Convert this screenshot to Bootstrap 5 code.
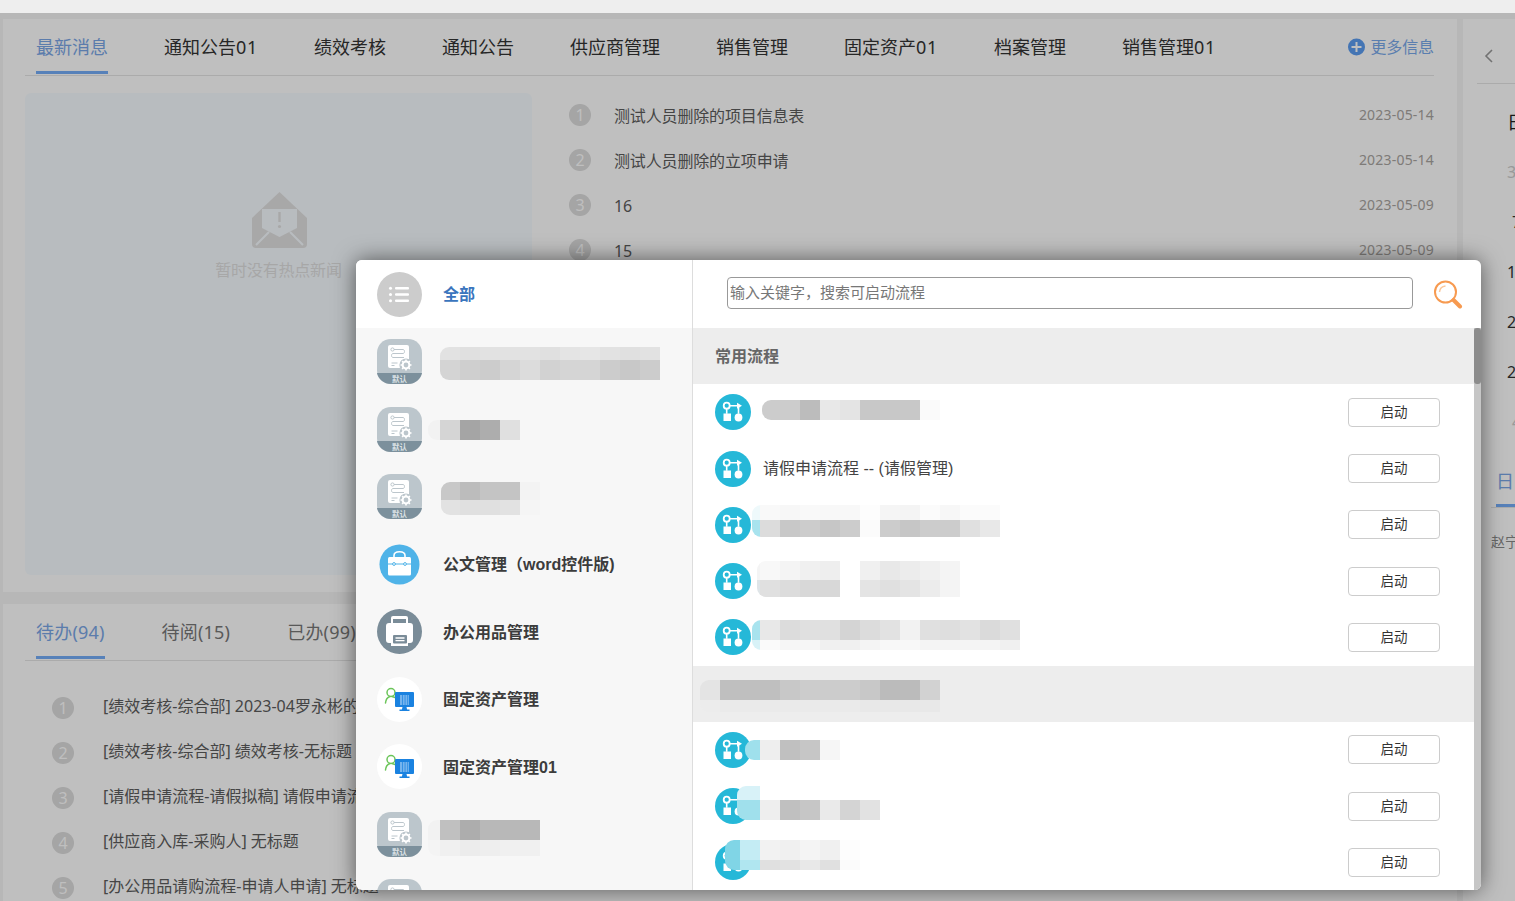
<!DOCTYPE html>
<html lang="zh-CN">
<head>
    <meta charset="UTF-8">
    <meta name="viewport" content="width=device-width, initial-scale=1.0">
    <title>工作台</title>
    <link href="https://cdn.jsdelivr.net/npm/bootstrap@5.3.0/dist/css/bootstrap.min.css" rel="stylesheet">
    <style>
        html, body { height: 901px; overflow: hidden; }
        body {
            font-family: "Noto Sans", "Noto Sans CJK SC", sans-serif;
            background: #f5f5f5;
            color: #333;
            position: relative;
        }
        .top-strip { height: 13px; background: #eee; }
        .desk { height: 888px; padding: 6px 0 0 3px; gap: 6px; }
        .desk-main { width: 1454px; gap: 12px; }
        .pane { background: #fff; }
        .pane-news { height: 573px; padding: 0 23px 0 22px; flex: none; }
        .pane-todo { flex: 1; min-height: 0; overflow: hidden; padding: 0 23px 0 22px; }
        .pane-side { flex: 1; overflow: hidden; min-width: 0; }

        .tab-bar { height: 57px; border-bottom: 1px solid #e4e4e4; padding-left: 11px; gap: 56px; flex-wrap: nowrap; }
        .tab-bar .nav-link {
            padding: 0; height: 55px; line-height: 56px; font-size: 18px; color: #333;
            border-bottom: 3px solid transparent; white-space: nowrap;
        }
        .tab-bar .nav-link.active { color: #7aa6e6; border-bottom-color: #75adf7; }
        .tab-num { letter-spacing: .7px; }
        .tab-bar-todo { gap: 57px; }
        .tab-bar-todo .nav-link { color: #777; letter-spacing: .2px; }
        .more-link { color: #78a8ea; font-size: 16px; text-decoration: none; gap: 5px; height: 56px; letter-spacing: -.1px; }

        .hot-empty {
            width: 507px; height: 482px; margin-top: 17px; background: #f6fbff;
            border-radius: 6px; color: #dfdfdf; font-size: 16px; padding: 99px 0 0 2px; letter-spacing: -.2px;
        }
        .hot-empty p { margin: 10px 2px 0 0; line-height: 24px; }
        .news-list { flex: 1; padding: 17px 0 0 37px; }
        .news-row { height: 45px; gap: 23px; font-size: 16px; color: #5c5c5c; letter-spacing: -.15px; }
        .news-row .when { margin-left: auto; margin-bottom: 2px; font-size: 14px; color: #a8a4a0; letter-spacing: .2px; }
        .news-row .rank { margin-bottom: 2px; }
        .rank {
            width: 22px; height: 22px; border-radius: 50%; background: #dcdcdc; color: #fff;
            font-size: 16px; line-height: 22px; text-align: center; flex: none; letter-spacing: 0;
        }
        .todo-list { padding: 24px 0 0 27px; }
        .todo-row { height: 45px; gap: 29px; font-size: 16px; color: #5c5c5c; white-space: nowrap; }
        .todo-text { margin-bottom: 3px; }

        .side-head { height: 65px; margin-left: 14px; border-bottom: 1px solid #e4e4e4; padding: 9px 0 0 7px; color: #888; }
        .cal-box { padding: 13px 0 0 44px; font-size: 16px; color: #333; white-space: nowrap; }
        .cal-cell { height: 50px; line-height: 50px; }
        .cal-faint { color: #ccc; }
        .cal-title { font-size: 18px; color: #222; height: 50px; line-height: 50px; }
        .cal-in { padding-left: 5px; }
        .side-tabs { margin: 11px 0 0 28px; border-bottom: 1px solid #e4e4e4; padding-left: 5px; height: 50px; overflow: hidden; }
        .side-tab { color: #7aa6e6; font-size: 18px; line-height: 47px; height: 49px; border-bottom: 3px solid #75adf7; width: 60px; }
        .side-name { margin: 23px 0 0 28px; font-size: 14px; color: #888; white-space: nowrap; }

        .dim-layer { position: absolute; left: 0; right: 0; top: 13px; bottom: 0; background: rgba(0, 0, 0, .25); }
        .picker {
            position: absolute; left: 356px; top: 260px; width: 1125px; height: 630px;
            border-radius: 6px; overflow: hidden; box-shadow: 0 0 22px rgba(0, 0, 0, .55);
            font-family: "Liberation Sans", "Noto Sans CJK SC", sans-serif;
        }
        .picker-wrap { position: absolute; inset: 0; }
        .cat-col { width: 337px; background: #f7f7f7; border-right: 1px solid #ddd; overflow: hidden; flex: none; }
        .cat-row { height: 67.5px; padding-left: 21px; gap: 21px; flex: none; font-size: 16px; font-weight: 700; color: #3c3c3c; }
        .cat-row span { padding-top: 2px; }
        .cat-row.current { height: 68px; background: #fff; color: #3a75bd; }
        .ic-45 { width: 45px; height: 45px; flex: none; display: block; }
        .flow-col { flex: 1; min-width: 0; background: #fff; }
        .search-row { height: 68px; padding-left: 34px; gap: 20px; flex: none; }
        .search-row .form-control {
            width: 686px; height: 32px; padding: 0 2px 2px; font-size: 15px; color: #333; margin-bottom: 2px;
            border: 1px solid #999; border-radius: 4px; box-shadow: none;
        }
        .search-row .form-control::placeholder { color: #777; opacity: 1; }
        .flow-scroll { flex: 1; min-height: 0; }
        .flow-body { flex: 1; min-width: 0; overflow: hidden; }
        .flow-head { height: 56.25px; background: #ededed; padding: 2px 0 0 22px; font-size: 16px; font-weight: 700; color: #666; }
        .flow-row { height: 56.25px; padding: 0 34px 0 22px; gap: 12px; font-size: 16px; color: #444; }
        .ic-36 { width: 36px; height: 36px; flex: none; display: block; }
        .start-btn {
            width: 92px; height: 29px; padding: 0; margin-left: auto; font-size: 13.5px; line-height: 25px;
            color: #333; background: #fff; border: 1px solid #ccc; border-radius: 4px;
        }
        .bar-track { width: 7px; background: #c6c6c6; flex: none; }
        .bar-thumb { height: 56px; background: #8c8c8c; border-radius: 3px; }
        .blur-layer { position: absolute; inset: 0; pointer-events: none; }
        .blur-patch { position: absolute; overflow: hidden; border-radius: 9px 0 0 9px; }
        .blur-line { display: flex; }
        .blur-line span { display: block; width: 20px; flex: none; }
    </style>
</head>
<body>
    <svg width="0" height="0" class="position-absolute">
        <symbol id="ic-default" viewBox="0 0 45 45">
            <path d="M14 0h17c8 0 14 6 14 14v17c0 8-6 14-14 14H14C6 45 0 39 0 31V14C0 6 6 0 14 0z" fill="#bcc6cc"/>
            <path d="M0 34h45c-1 6-7 11-14 11H14C7 45 1 40 0 34z" fill="#7c909c"/>
            <rect x="11" y="6" width="21" height="23" rx="2" fill="#fff"/>
            <g fill="none" stroke="#bcc6cc" stroke-width="1">
                <circle cx="15.5" cy="10.5" r="1.6"/>
                <path d="M17 10.5h9c2 0 2 4 0 4H16c-2 0-2 4 0 4h11"/>
                <path d="M14.5 24h6M14.5 26.5h3"/>
            </g>
            <circle cx="29" cy="26" r="6.6" fill="#bcc6cc"/>
            <circle cx="29" cy="26" r="3.4" fill="none" stroke="#fff" stroke-width="2"/>
            <path d="M29 20.5v2M29 29.5v2M23.5 26h2M32.5 26h2M25.1 22.1l1.4 1.4M31.5 28.5l1.4 1.4M25.1 29.9l1.4-1.4M31.5 23.5l1.4-1.4" stroke="#fff" stroke-width="1.6"/>
            <text x="22.5" y="42.5" font-size="7.5" text-anchor="middle" fill="#dbe2e6" font-family="Noto Sans CJK SC, sans-serif">默认</text>
        </symbol>
        <symbol id="ic-assets" viewBox="0 0 45 45">
            <circle cx="22.5" cy="22.5" r="22.5" fill="#fff"/>
            <circle cx="14" cy="15.5" r="4" fill="none" stroke="#6cc55a" stroke-width="1.5"/>
            <path d="M8.5 26c.3-3.5 2-5.6 4.5-6.5M15 19.5l3 1" fill="none" stroke="#6cc55a" stroke-width="1.5" stroke-linecap="round"/>
            <rect x="18" y="15" width="19" height="15" rx="1" fill="#1a82e0"/>
            <path d="M25.5 30h4l.6 2.5h2.4V34h-10v-1.5h2.4z" fill="#1a82e0"/>
            <path d="M23 19h9M23 21h9M23 23h9M23 25h9M23 27h9" stroke="#cfe6fb" stroke-width="1.1" stroke-dasharray="2 .7"/>
        </symbol>
        <symbol id="ic-flow" viewBox="0 0 36 36">
            <circle cx="18" cy="18" r="18" fill="#25b8d8"/>
            <circle cx="11.7" cy="11.7" r="3" fill="none" stroke="#fff" stroke-width="1.8"/>
            <path d="M14.5 11.7h9v8M11.7 14.7v5" fill="none" stroke="#fff" stroke-width="1.6"/>
            <path d="M22 8.7l5 3-5 3z" fill="#fff"/>
            <rect x="8.5" y="19.5" width="7.5" height="7.5" fill="#fff"/>
            <circle cx="23.5" cy="23.5" r="3.9" fill="#fff"/>
        </symbol>
    </svg>

    <div class="top-strip"></div>
    <div class="desk d-flex">
        <div class="desk-main d-flex flex-column">
            <section class="pane pane-news">
                <ul class="nav tab-bar align-items-start">
                    <li class="nav-item"><a class="nav-link active" href="#">最新消息</a></li>
                    <li class="nav-item"><a class="nav-link" href="#">通知公告<span class="tab-num">01</span></a></li>
                    <li class="nav-item"><a class="nav-link" href="#">绩效考核</a></li>
                    <li class="nav-item"><a class="nav-link" href="#">通知公告</a></li>
                    <li class="nav-item"><a class="nav-link" href="#">供应商管理</a></li>
                    <li class="nav-item"><a class="nav-link" href="#">销售管理</a></li>
                    <li class="nav-item"><a class="nav-link" href="#">固定资产<span class="tab-num">01</span></a></li>
                    <li class="nav-item"><a class="nav-link" href="#">档案管理</a></li>
                    <li class="nav-item"><a class="nav-link" href="#">销售管理<span class="tab-num">01</span></a></li>
                    <li class="nav-item ms-auto">
                        <a class="more-link d-flex align-items-center" href="#">
                            <svg width="17" height="18" viewBox="0 0 17 18" class="d-block"><circle cx="8.5" cy="9" r="8.5" fill="#5b9cf0"/><path d="M3.5 9h10M8.5 4v10" stroke="#fff" stroke-width="2"/></svg>
                            <span class="lh-base">更多信息</span>
                        </a>
                    </li>
                </ul>
                <div class="d-flex">
                    <div class="hot-empty text-center">
                        <svg width="55" height="56" viewBox="0 0 55 56" class="d-block mx-auto">
                            <path d="M27.5 0L55 26v26a4 4 0 0 1-4 4H4a4 4 0 0 1-4-4V26z" fill="#e1e1e1"/>
                            <path d="M10 17h35v19l-17.5 9L10 36z" fill="#f6fbff"/>
                            <path d="M27.5 20v10" stroke="#e1e1e1" stroke-width="2.4"/>
                            <circle cx="27.5" cy="34.5" r="1.6" fill="#e1e1e1"/>
                            <path d="M4 53l13-13M51 53L38 40" stroke="#f6fbff" stroke-width="2"/>
                        </svg>
                        <p>暂时没有热点新闻</p>
                    </div>
                    <div class="news-list">
                        <div class="news-row d-flex align-items-center"><span class="rank">1</span><span>测试人员删除的项目信息表</span><span class="when">2023-05-14</span></div>
                        <div class="news-row d-flex align-items-center"><span class="rank">2</span><span>测试人员删除的立项申请</span><span class="when">2023-05-14</span></div>
                        <div class="news-row d-flex align-items-center"><span class="rank">3</span><span>16</span><span class="when">2023-05-09</span></div>
                        <div class="news-row d-flex align-items-center"><span class="rank">4</span><span>15</span><span class="when">2023-05-09</span></div>
                    </div>
                </div>
            </section>
            <section class="pane pane-todo">
                <ul class="nav tab-bar tab-bar-todo align-items-start">
                    <li class="nav-item"><a class="nav-link active" href="#">待办(94)</a></li>
                    <li class="nav-item"><a class="nav-link" href="#">待阅(15)</a></li>
                    <li class="nav-item"><a class="nav-link" href="#">已办(99)</a></li>
                </ul>
                <div class="todo-list">
                    <div class="todo-row d-flex align-items-center"><span class="rank">1</span><span class="todo-text">[绩效考核-综合部] 2023-04罗永彬的绩效考核</span></div>
                    <div class="todo-row d-flex align-items-center"><span class="rank">2</span><span class="todo-text">[绩效考核-综合部] 绩效考核-无标题</span></div>
                    <div class="todo-row d-flex align-items-center"><span class="rank">3</span><span class="todo-text">[请假申请流程-请假拟稿] 请假申请流程</span></div>
                    <div class="todo-row d-flex align-items-center"><span class="rank">4</span><span class="todo-text">[供应商入库-采购人] 无标题</span></div>
                    <div class="todo-row d-flex align-items-center"><span class="rank">5</span><span class="todo-text">[办公用品请购流程-申请人申请] 无标题</span></div>
                </div>
            </section>
        </div>
        <aside class="pane pane-side">
            <div class="side-head d-flex align-items-center">
                <svg width="10" height="16" viewBox="0 0 10 16" class="d-block"><path d="M8 2L2 8l6 6" fill="none" stroke="#999" stroke-width="1.6"/></svg>
            </div>
            <div class="cal-box">
                <div class="cal-title">日</div>
                <div class="cal-cell cal-faint">3</div>
                <div class="cal-cell cal-in">7</div>
                <div class="cal-cell">1</div>
                <div class="cal-cell">2</div>
                <div class="cal-cell">2</div>
                <div class="cal-cell cal-faint cal-in">4</div>
            </div>
            <div class="side-tabs"><div class="side-tab">日</div></div>
            <div class="side-name">赵宁</div>
        </aside>
    </div>

    <div class="dim-layer"></div>

    <div class="picker">
        <div class="picker-wrap d-flex">
            <div class="cat-col d-flex flex-column">
                <div class="cat-row current d-flex align-items-center">
                    <svg class="ic-45" viewBox="0 0 45 45"><circle cx="22.5" cy="22.5" r="22.5" fill="#ccc"/><g fill="#fff"><circle cx="13.5" cy="16.3" r="1.5"/><circle cx="13.5" cy="22.5" r="1.5"/><circle cx="13.5" cy="28.7" r="1.5"/><rect x="18" y="15" width="14" height="2.6" rx="1"/><rect x="18" y="21.2" width="14" height="2.6" rx="1"/><rect x="18" y="27.4" width="14" height="2.6" rx="1"/></g></svg>
                    <span>全部</span>
                </div>
                <div class="cat-row d-flex align-items-center"><svg class="ic-45"><use href="#ic-default"/></svg></div>
                <div class="cat-row d-flex align-items-center"><svg class="ic-45"><use href="#ic-default"/></svg></div>
                <div class="cat-row d-flex align-items-center"><svg class="ic-45"><use href="#ic-default"/></svg></div>
                <div class="cat-row d-flex align-items-center">
                    <svg class="ic-45" viewBox="0 0 45 45"><circle cx="22.5" cy="22.5" r="20" fill="#4fb3e8"/><path d="M17 15v-1.5c0-5 11-5 11 0V15" fill="none" stroke="#fff" stroke-width="1.6"/><path d="M12.5 15h20a1.5 1.5 0 0 1 1.5 1.5V32a1.5 1.5 0 0 1-1.5 1.5h-20A1.5 1.5 0 0 1 11 32V16.5A1.5 1.5 0 0 1 12.5 15z" fill="#fff"/><path d="M11 22h23" stroke="#4fb3e8" stroke-width="1"/><circle cx="17" cy="22" r="1.4" fill="#fff" stroke="#4fb3e8"/><circle cx="28" cy="22" r="1.4" fill="#fff" stroke="#4fb3e8"/></svg>
                    <span>公文管理（word控件版)</span>
                </div>
                <div class="cat-row d-flex align-items-center">
                    <svg class="ic-45" viewBox="0 0 45 45"><circle cx="22.5" cy="22.5" r="22.5" fill="#7a8c98"/><path d="M16 7h13a2 2 0 0 1 2 2v5H14V9a2 2 0 0 1 2-2z" fill="#fff"/><path d="M16 10h13v4H16z" fill="#7a8c98"/><path d="M12 14h21a3 3 0 0 1 3 3v14a3 3 0 0 1-3 3h-2v3H14v-3h-2a3 3 0 0 1-3-3V17a3 3 0 0 1 3-3z" fill="#fff"/><rect x="16" y="26" width="14" height="8.5" rx="1" fill="#7a8c98"/><path d="M18.5 29h9M18.5 31.7h9" stroke="#fff" stroke-width="1.3"/></svg>
                    <span>办公用品管理</span>
                </div>
                <div class="cat-row d-flex align-items-center"><svg class="ic-45"><use href="#ic-assets"/></svg><span>固定资产管理</span></div>
                <div class="cat-row d-flex align-items-center"><svg class="ic-45"><use href="#ic-assets"/></svg><span>固定资产管理01</span></div>
                <div class="cat-row d-flex align-items-center"><svg class="ic-45"><use href="#ic-default"/></svg></div>
                <div class="cat-row d-flex align-items-center"><svg class="ic-45"><use href="#ic-default"/></svg></div>
            </div>
            <div class="flow-col d-flex flex-column">
                <div class="search-row d-flex align-items-center">
                    <input class="form-control" type="text" placeholder="输入关键字，搜索可启动流程">
                    <svg width="30" height="30" viewBox="0 0 30 30" class="d-block flex-shrink-0"><circle cx="12.5" cy="13" r="10.5" fill="none" stroke="#f79a50" stroke-width="2"/><path d="M6.5 13c.3-3.3 2.7-5.7 6-6" fill="none" stroke="#fbc79b" stroke-width="1.5"/><path d="M20.5 21l6.5 6.5" stroke="#f79a50" stroke-width="4" stroke-linecap="round"/></svg>
                </div>
                <div class="flow-scroll d-flex">
                    <div class="flow-body">
                        <div class="flow-head d-flex align-items-center">常用流程</div>
                        <div class="flow-row d-flex align-items-center"><svg class="ic-36"><use href="#ic-flow"/></svg><button class="btn start-btn">启动</button></div>
                        <div class="flow-row d-flex align-items-center"><svg class="ic-36"><use href="#ic-flow"/></svg><span>请假申请流程 -- (请假管理)</span><button class="btn start-btn">启动</button></div>
                        <div class="flow-row d-flex align-items-center"><svg class="ic-36"><use href="#ic-flow"/></svg><button class="btn start-btn">启动</button></div>
                        <div class="flow-row d-flex align-items-center"><svg class="ic-36"><use href="#ic-flow"/></svg><button class="btn start-btn">启动</button></div>
                        <div class="flow-row d-flex align-items-center"><svg class="ic-36"><use href="#ic-flow"/></svg><button class="btn start-btn">启动</button></div>
                        <div class="flow-head d-flex align-items-center"></div>
                        <div class="flow-row d-flex align-items-center"><svg class="ic-36"><use href="#ic-flow"/></svg><button class="btn start-btn">启动</button></div>
                        <div class="flow-row d-flex align-items-center"><svg class="ic-36"><use href="#ic-flow"/></svg><button class="btn start-btn">启动</button></div>
                        <div class="flow-row d-flex align-items-center"><svg class="ic-36"><use href="#ic-flow"/></svg><button class="btn start-btn">启动</button></div>
                    </div>
                    <div class="bar-track"><div class="bar-thumb"></div></div>
                </div>
            </div>
        </div>
        <div class="blur-layer" id="blurLayer"></div>
    </div>

    <script>
        // mosaic over the names hidden in the screenshot: page x/y, width of first block, then [height, colours]
        const patches = [
            [440, 347, 20, [[13, 'e2 e0 e2 e2 e2 e0 e4 e6 e2 e0 e2'], [20, 'd4 cf cc d5 dc d2 d5 d5 cc c8 cc']]],
            [428, 420, 12, [[20, 'f2 d5 a5 ad e0']]],
            [441, 482, 19, [[18, 'c8 bc c4 c4 f3'], [15, 'e2 e0 e0 e2 f5']]],
            [428, 820, 12, [[20, 'f2 c0 ad b8 b8 b8'], [16, 'f4 f0 ec ee f0 f0']]],
            [762, 400, 18, [[20, 'cc cc bc e8 e4 c8 c8 c8 fa']]],
            [752, 505, 8, [[15, 'eef9fb f9 f7 f9 f8 f8 fd f5 f4 fb f7 fb fb'], [17, 'a8e3ee dc c8 cc c6 cc fb cc c6 cc cc e0 e8']]],
            [757, 561, 3, [[19, 'f4 f8 f4 f0 ee ff f0 e8 ec f0 f4'], [17, 'dfe5e8 e0 dc d8 d8 ff e4 e0 e4 ec f4']]],
            [752, 620, 8, [[20, 'a8e3ee e8 dc e0 e0 d4 dc e2 f2 e0 de e2 da e0'], [10, 'd8f2f7 fa f6 f6 f0 f0 f4 f8 f8 f4 f4 f4 f4 f0']]],
            [700, 680, 20, [[20, 'e4 bf bf bf c8 cc cc cc c8 bb bb d2'], [12, 'ec ea ea ea ea ea ea ea e8 e8 e8 e8']]],
            [745, 740, 15, [[20, '9fe0ec ee c0 c6 f6']]],
            [737, 786, 23, [[14, 'd8f2f8'], [20, 'a0e0ec ee c0 c6 ea d4 e2']]],
            [725, 840, 15, [[20, '80d5e6 c4ecf4 f2 f0 f4 f0 fd'], [10, '80d5e6 b0e6f0 e0 e2 e8 e0 fb']]]
        ];
        const blurLayer = document.getElementById('blurLayer');
        patches.forEach(function (p) {
            const patch = document.createElement('div');
            patch.className = 'blur-patch';
            patch.style.left = (p[0] - 356) + 'px';
            patch.style.top = (p[1] - 260) + 'px';
            p[3].forEach(function (line) {
                const row = document.createElement('div');
                row.className = 'blur-line';
                line[1].split(' ').forEach(function (c, i) {
                    const cell = document.createElement('span');
                    cell.style.height = line[0] + 'px';
                    cell.style.background = '#' + (c.length === 2 ? c + c + c : c);
                    if (i === 0) cell.style.width = p[2] + 'px';
                    row.appendChild(cell);
                });
                patch.appendChild(row);
            });
            blurLayer.appendChild(patch);
        });
    </script>
    <script src="https://cdn.jsdelivr.net/npm/bootstrap@5.3.0/dist/js/bootstrap.bundle.min.js"></script>
</body>
</html>
